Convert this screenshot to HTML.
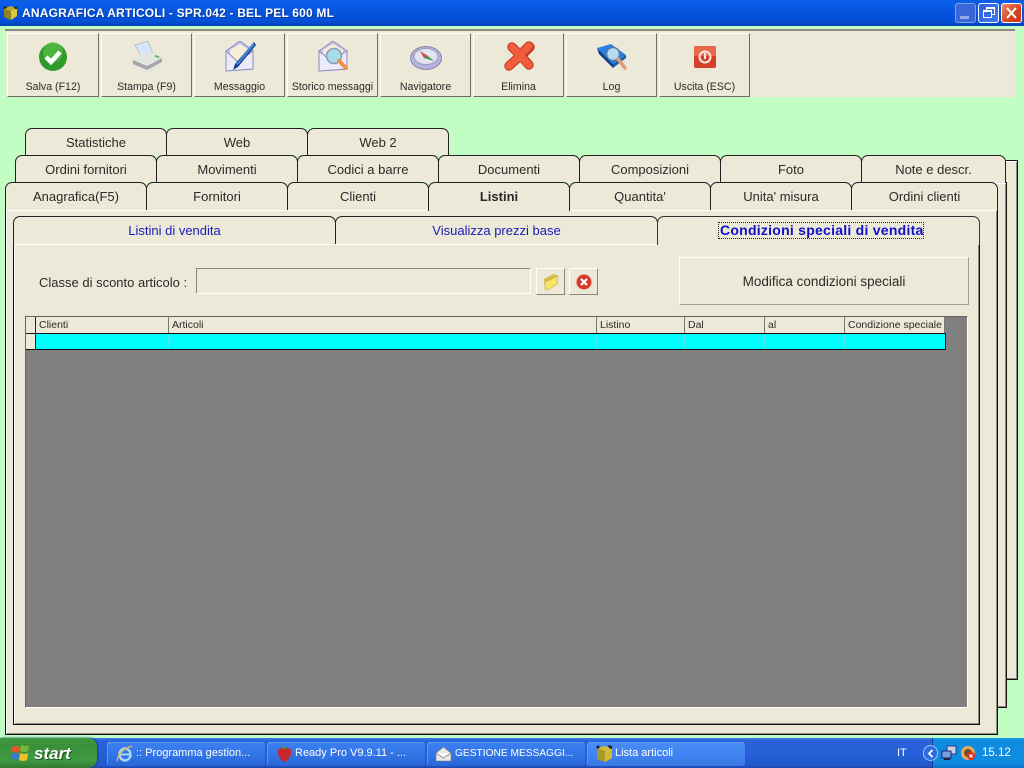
<!DOCTYPE html>
<html><head><meta charset="utf-8"><style>
html,body{margin:0;padding:0;width:1024px;height:768px;overflow:hidden;background:#c2fdc4}
body{position:relative;font-family:"Liberation Sans",sans-serif;color:#2a2a2a}
div,span,svg{position:absolute;box-sizing:border-box}
.tb{top:33px;height:64px;background:#ece9d8;border:1px solid;border-color:#fff #6f6e64 #6f6e64 #fff;font-size:10.6px;text-align:center;line-height:14px}
.tb span{left:0;right:0;top:46px;white-space:nowrap}
.tb svg{left:50%;margin-left:-16px;top:7px}
.t{width:142px;height:28px;background:#ece9d8;border:1px solid #222;border-bottom:none;border-radius:7px 7px 0 0;font-size:13px;text-align:center;line-height:27px;white-space:nowrap}
.p{background:#ece9d8;border:1px solid #111;box-shadow:inset 1px 1px 0 #fff,inset -1px -1px 0 #8e8c80}
.st{height:28px;background:#ece9d8;border:1px solid #222;border-bottom:none;border-radius:7px 7px 0 0;font-size:13px;color:#1a1ab8;text-align:center;line-height:27px}
.h{top:317px;height:16px;background:#ece9d8;border-right:1px solid #777;font-size:10.5px;line-height:16px;padding-left:3px;white-space:nowrap;overflow:hidden}
.c{top:334px;height:15px;width:1px;background:#4fe9e9}
.task{top:742px;height:24px;width:158px;background:linear-gradient(#3c80f0,#3173e6 60%,#2a66d4);border-radius:3px;color:#fff;font-size:11px;line-height:23px;white-space:nowrap;box-shadow:inset 1px 1px 0 #5f9af2}
</style></head><body>

<div style="left:0;top:0;width:1024px;height:26px;background:linear-gradient(#0a5be0 0,#0a60ec 10%,#0553dc 50%,#0450d8 80%,#0342b8 100%)"></div>
<svg style="left:2px;top:5px" width="16" height="16" viewBox="0 0 16 16"><path d="M2 4l6-3 7 2v8l-6 4-7-3z" fill="#b9a92a"/><path d="M2 4l7 2 6-3v8l-6 4z" fill="#d8c93a"/><path d="M2 4l7 2v9l-7-3z" fill="#8f8320"/><path d="M1 3l2-2 2 1-2 2zM12 2l3 0 0 2-2 0z" fill="#222"/></svg>
<div style="left:22px;top:5px;color:#fff;font-size:12px;font-weight:bold;line-height:16px;letter-spacing:.19px;white-space:nowrap;text-shadow:1px 1px 0 #0a3a9c">ANAGRAFICA ARTICOLI - SPR.042 - BEL PEL 600 ML</div>
<div style="left:955px;top:3px;width:21px;height:20px;background:#3b66d8;border:1px solid #7f9ee8;border-radius:3px"><div style="left:4px;top:12px;width:9px;height:3px;background:#8ea8e8"></div></div>
<div style="left:978px;top:3px;width:21px;height:20px;background:linear-gradient(135deg,#2f5fe0,#3f78ee);border:1px solid #fff;border-radius:3px"><div style="left:7px;top:3px;width:9px;height:8px;border:1px solid #fff;border-top-width:2px"></div><div style="left:4px;top:6px;width:9px;height:8px;border:1px solid #fff;border-top-width:2px;background:#3567e2"></div></div>
<div style="left:1001px;top:3px;width:21px;height:20px;background:linear-gradient(135deg,#e88a6a,#d6431c 60%,#c43414);border:1px solid #fff;border-radius:3px"><svg style="left:3px;top:3px" width="13" height="12" viewBox="0 0 13 12"><path d="M2 1l9 10M11 1l-9 10" stroke="#fff" stroke-width="2"/></svg></div>

<div style="left:5px;top:29px;width:1010px;height:68px;background:#ece9d8;border-top:2px solid #8b8a7c"></div>

<div class="tb" style="left:7px;width:92px"><svg width="32" height="32" viewBox="0 0 32 32"><circle cx="16" cy="16" r="14" fill="#2f9a2a"/><circle cx="16" cy="11" r="10" fill="#62c44e" opacity=".6"/><path d="M9 16l5 5 9-10" fill="none" stroke="#fff" stroke-width="4.500"/></svg><span>Salva (F12)</span></div>
<div class="tb" style="left:101px;width:91px"><svg width="32" height="32" viewBox="0 0 32 32"><path d="M4 4L17 0l5 13-11 4z" fill="#d4e6f8" stroke="#a8b4c0" stroke-width=".7"/><path d="M2 18l8-5 13-1 8 5v6l-15 8-14-6z" fill="#e4e6e2"/><path d="M2 19l14 6 15-8v6l-15 8-14-6z" fill="#a4a8a4"/><path d="M2 23l14 6 15-8v2l-15 8-14-6z" fill="#e8eae8"/><path d="M25 14l4 2-2 1-4-2z" fill="#5eae5e"/></svg><span>Stampa (F9)</span></div>
<div class="tb" style="left:194px;width:91px"><svg width="32" height="32" viewBox="0 0 32 32"><path d="M2 10L16 0l13 10v18L2 30z" fill="#c4c2ea" stroke="#8e8cbc"/><path d="M6 9l10-6 9 6v10H6z" fill="#f8eed8"/><path d="M2 10l12 11 15-11v18L2 30z" fill="#ecebfb" stroke="#8e8cbc"/><path d="M30 1l2 3-18 22-5 3 2-6z" fill="#143f8c"/><path d="M29 2l1.500 2L14 24l-2-1z" fill="#3f86d8"/></svg><span>Messaggio</span></div>
<div class="tb" style="left:287px;width:91px"><svg width="32" height="32" viewBox="0 0 32 32"><path d="M2 10L16 0l14 10v18L2 30z" fill="#c8c6ec" stroke="#8e8cbc"/><path d="M6 9l10-6 10 6v9H6z" fill="#f8eed8"/><path d="M2 10l12 10 16-10v18L2 30z" fill="#ecebfb" stroke="#8e8cbc"/><circle cx="17" cy="15" r="7.500" fill="#a8dcec" stroke="#8a9cb0" stroke-width="1.500"/><path d="M22 20l7 7" stroke="#f09048" stroke-width="4" stroke-linecap="round"/></svg><span>Storico messaggi</span></div>
<div class="tb" style="left:380px;width:91px"><svg width="32" height="32" viewBox="0 0 32 32"><ellipse cx="16" cy="17" rx="15.500" ry="11.500" fill="#b4b4dc" stroke="#8484ac"/><ellipse cx="16" cy="15.500" rx="12" ry="8" fill="#e4e4f0" stroke="#9a9ab8"/><path d="M10 10l8 5-4 2z" fill="#d84a3a"/><path d="M24 20l-10-3 4-2z" fill="#3a9a4a"/></svg><span>Navigatore</span></div>
<div class="tb" style="left:473px;width:91px"><svg width="32" height="32" viewBox="0 0 32 32"><path d="M9 6l8 8 9-9M27 6l-9 9 8 9M17 15l-11 10" fill="none" stroke="#c8381e" stroke-width="9.500" stroke-linecap="round" stroke-linejoin="round"/><path d="M9 6l8 8 9-9M26 24l-9-9-11 10" fill="none" stroke="#f05c3c" stroke-width="7.500" stroke-linecap="round" stroke-linejoin="round"/></svg><span>Elimina</span></div>
<div class="tb" style="left:566px;width:91px"><svg width="32" height="32" viewBox="0 0 32 32"><path d="M1 7L15 3l15 11-13 9z" fill="#2a80e0"/><path d="M1 7l16 16 0 4L3 13z" fill="#0c3f92"/><path d="M17 23l13-9v3l-13 10z" fill="#1a5ab4"/><circle cx="17" cy="13" r="6.500" fill="#b4dcf2" stroke="#5a7a9c" stroke-width="1.500"/><path d="M22 18l7 9" stroke="#dca070" stroke-width="3.500" stroke-linecap="round"/></svg><span>Log</span></div>
<div class="tb" style="left:659px;width:91px"><svg width="32" height="32" viewBox="0 0 32 32"><rect x="5" y="5" width="22" height="22" rx="2" fill="#d4402a"/><rect x="5" y="5" width="22" height="10" rx="2" fill="#e8684c"/><circle cx="16" cy="16" r="5.500" fill="none" stroke="#f6e8e0" stroke-width="2"/><path d="M16 12v6" stroke="#f6e8e0" stroke-width="2"/></svg><span>Uscita (ESC)</span></div>

<div class="p" style="left:600px;top:160px;width:418px;height:520px"></div>
<div class="p" style="left:600px;top:182px;width:407px;height:526px"></div>

<div class="t" style="left:25px;top:128px">Statistiche</div>
<div class="t" style="left:166px;top:128px">Web</div>
<div class="t" style="left:307px;top:128px">Web 2</div>

<div class="t" style="left:15px;top:155px">Ordini fornitori</div>
<div class="t" style="left:156px;top:155px">Movimenti</div>
<div class="t" style="left:297px;top:155px">Codici a barre</div>
<div class="t" style="left:438px;top:155px">Documenti</div>
<div class="t" style="left:579px;top:155px">Composizioni</div>
<div class="t" style="left:720px;top:155px">Foto</div>
<div class="t" style="left:861px;top:155px;width:145px">Note e descr.</div>

<div class="p" style="left:5px;top:209px;width:993px;height:526px"></div>
<div class="t" style="left:5px;top:182px">Anagrafica(F5)</div>
<div class="t" style="left:146px;top:182px">Fornitori</div>
<div class="t" style="left:287px;top:182px">Clienti</div>
<div class="t" style="left:569px;top:182px">Quantita'</div>
<div class="t" style="left:710px;top:182px">Unita' misura</div>
<div class="t" style="left:851px;top:182px;width:147px">Ordini clienti</div>
<div class="t" style="left:428px;top:182px;height:29px;font-weight:bold;z-index:2">Listini</div>

<div class="p" style="left:13px;top:243px;width:967px;height:482px"></div>
<div class="st" style="left:13px;top:216px;width:323px">Listini di vendita</div>
<div class="st" style="left:335px;top:216px;width:323px">Visualizza prezzi base</div>
<div class="st" style="left:657px;top:216px;width:323px;height:29px;border-color:#333;z-index:2;font-weight:bold;color:#1010c8"><span style="left:60px;top:5px;width:206px;height:17px;line-height:15px;border:1px dotted #222;white-space:nowrap;font-size:14px;letter-spacing:.25px;text-align:left;padding-left:1px">Condizioni speciali di vendita</span></div>

<div style="left:39px;top:275px;font-size:13px;line-height:15px;white-space:nowrap">Classe di sconto articolo :</div>
<div style="left:196px;top:268px;width:335px;height:26px;background:#ece9d8;border:1px solid;border-color:#8a887c #fff #fff #8a887c"></div>
<div style="left:536px;top:268px;width:29px;height:27px;background:#ece9d8;border:1px solid;border-color:#fff #8a887c #8a887c #fff"><svg style="left:5px;top:3px" width="18" height="19" viewBox="0 0 18 19"><path d="M2 7l9-5 4 1 1 8-9 6H3z" fill="#d8bc4a"/><path d="M3 10l13-6-1 8-9 6-3-1z" fill="#f8e468" stroke="#c8b04a" stroke-width=".7"/></svg></div>
<div style="left:569px;top:268px;width:29px;height:27px;background:#ece9d8;border:1px solid;border-color:#fff #8a887c #8a887c #fff"><svg style="left:5px;top:4px" width="18" height="18" viewBox="0 0 18 18"><circle cx="9" cy="9" r="7.500" fill="#d83a2a"/><path d="M6 6l6 6M12 6l-6 6" stroke="#fff" stroke-width="2.200"/></svg></div>
<div style="left:679px;top:257px;width:290px;height:48px;background:#ece9d8;border:1px solid;border-color:#fff #a09e90 #a09e90 #fff;font-size:13.500px;line-height:47px;text-align:center">Modifica condizioni speciali</div>

<div style="left:25px;top:316px;width:943px;height:392px;background:#808080;border:1px solid;border-color:#66645c #fff #fff #66645c"></div>
<div class="h" style="left:26px;width:10px;border-right:1px solid #222"></div>
<div class="h" style="left:36px;width:133px">Clienti</div>
<div class="h" style="left:169px;width:428px">Articoli</div>
<div class="h" style="left:597px;width:88px">Listino</div>
<div class="h" style="left:685px;width:80px">Dal</div>
<div class="h" style="left:765px;width:80px">al</div>
<div class="h" style="left:845px;width:100px">Condizione speciale</div>
<div style="left:26px;top:333px;width:920px;height:1px;background:#111"></div>
<div style="left:26px;top:334px;width:10px;height:15px;background:#ece9d8;border-right:1px solid #222"></div>
<div style="left:36px;top:334px;width:909px;height:15px;background:#00ffff"></div>
<div style="left:26px;top:349px;width:920px;height:1px;background:#111"></div>
<div style="left:945px;top:333px;width:1px;height:17px;background:#111"></div>
<div class="c" style="left:168px"></div><div class="c" style="left:596px"></div><div class="c" style="left:684px"></div><div class="c" style="left:764px"></div><div class="c" style="left:844px"></div>

<div style="left:0;top:738px;width:1024px;height:30px;background:linear-gradient(#3d7de8 0,#2a62d8 8%,#2560d8 50%,#2459ce 90%,#1c48b0 100%)"></div>
<div style="left:0;top:738px;width:97px;height:30px;background:linear-gradient(#3f9a44,#3a9038 25%,#3f9a42 75%,#2f7a30);border-radius:0 9px 9px 0;box-shadow:1px 0 2px #1a3a8a"></div>
<svg style="left:11px;top:744px" width="19" height="18" viewBox="0 0 19 18"><path d="M1 3q4-2 8 0l-1 6q-4-2-8 0z" fill="#e2552a"/><path d="M10 1q4 2 8 0l-1 6q-4 2-8 0z" fill="#7ab83a"/><path d="M0 10q4-2 8 0l-1 6q-4-2-8 0z" fill="#3a78d8"/><path d="M9 9q4 2 8 0l-1 7q-4 2-8 0z" fill="#f0c02a"/></svg>
<div style="left:34px;top:744px;color:#fff;font-size:17px;font-weight:bold;font-style:italic;line-height:19px;text-shadow:1px 1px 1px #1a4a1a">start</div>

<div class="task" style="left:107px"><svg style="left:9px;top:3px" width="18" height="18" viewBox="0 0 18 18"><ellipse cx="9" cy="9.500" rx="5.500" ry="6" fill="none" stroke="#a8d8f4" stroke-width="2.400"/><path d="M4 9.500h10" stroke="#a8d8f4" stroke-width="2"/><path d="M1 16Q3 5 16 1" fill="none" stroke="#e0b84a" stroke-width="1.300"/></svg><span style="left:29px;top:0">:: Programma gestion...</span></div>
<div class="task" style="left:267px"><svg style="left:10px;top:3px" width="15" height="18" viewBox="0 0 15 18"><path d="M7.500 3C13 2 15 5 14 9c-1 4-4 7-6.500 8C5 16 2 13 1 9 0 5 2 2 7.500 3z" fill="#c8282a"/><path d="M4 1l3.500 2 3.500-2-1 3H5z" fill="#4a8a3a"/></svg><span style="left:28px;top:0">Ready Pro V9.9.11 - ...</span></div>
<div class="task" style="left:427px"><svg style="left:8px;top:3px" width="17" height="18" viewBox="0 0 17 18"><path d="M1 8l7.500-6L16 8v8H1z" fill="#e8e8e8" stroke="#777" stroke-width=".6"/><path d="M1 8l7.500 5L16 8" fill="#fff" stroke="#888" stroke-width=".8"/></svg><span style="left:28px;top:0;font-size:10.200px">GESTIONE MESSAGGI...</span></div>
<div class="task" style="left:587px;background:linear-gradient(#4a8cf4,#3f82f0 60%,#3a78e4)"><svg style="left:8px;top:2px" width="18" height="19" viewBox="0 0 18 19"><path d="M2 4l8-2 7 3v9l-7 4-8-3z" fill="#d0bc34"/><path d="M2 4l8 3v11l-8-3z" fill="#a89828"/><path d="M1 3l2-2 2 2-2 2zM13 1l4 1v3l-3-1z" fill="#222"/></svg><span style="left:28px;top:0">Lista articoli</span></div>

<div style="left:897px;top:746px;color:#fff;font-size:11px;line-height:14px">IT</div>
<div style="left:932px;top:738px;width:92px;height:30px;background:linear-gradient(#1a9ae8,#0f8be0 10%,#0f8be0 85%,#0a70c8);border-left:1px solid #123c9c"></div>
<div style="left:923px;top:745px;width:15px;height:16px;border-radius:8px;background:#2e6ce0;border:1px solid #9cc4f4"><svg style="left:3px;top:3px" width="8" height="9" viewBox="0 0 8 9"><path d="M5.500 1L2 4.500 5.500 8" fill="none" stroke="#fff" stroke-width="1.800"/></svg></div>
<svg style="left:941px;top:745px" width="16" height="16" viewBox="0 0 16 16"><rect x="6" y="1" width="9" height="8" fill="#c8d4e8" stroke="#2a3a7c"/><rect x="1" y="6" width="9" height="7" fill="#7c9ce0" stroke="#1c2a6c"/><rect x="3" y="13" width="6" height="2" fill="#223"/></svg>
<svg style="left:960px;top:745px" width="16" height="16" viewBox="0 0 16 16"><circle cx="8" cy="8" r="7" fill="#e8a860"/><circle cx="8" cy="8" r="4" fill="#7a4a2a"/><circle cx="11" cy="11" r="4" fill="#e03020"/><path d="M9.500 9.500l3 3M12.500 9.500l-3 3" stroke="#fff" stroke-width="1.200"/></svg>
<div style="left:982px;top:746px;color:#fff;font-size:11.500px;line-height:14px;white-space:nowrap">15.12</div>
</body></html>
